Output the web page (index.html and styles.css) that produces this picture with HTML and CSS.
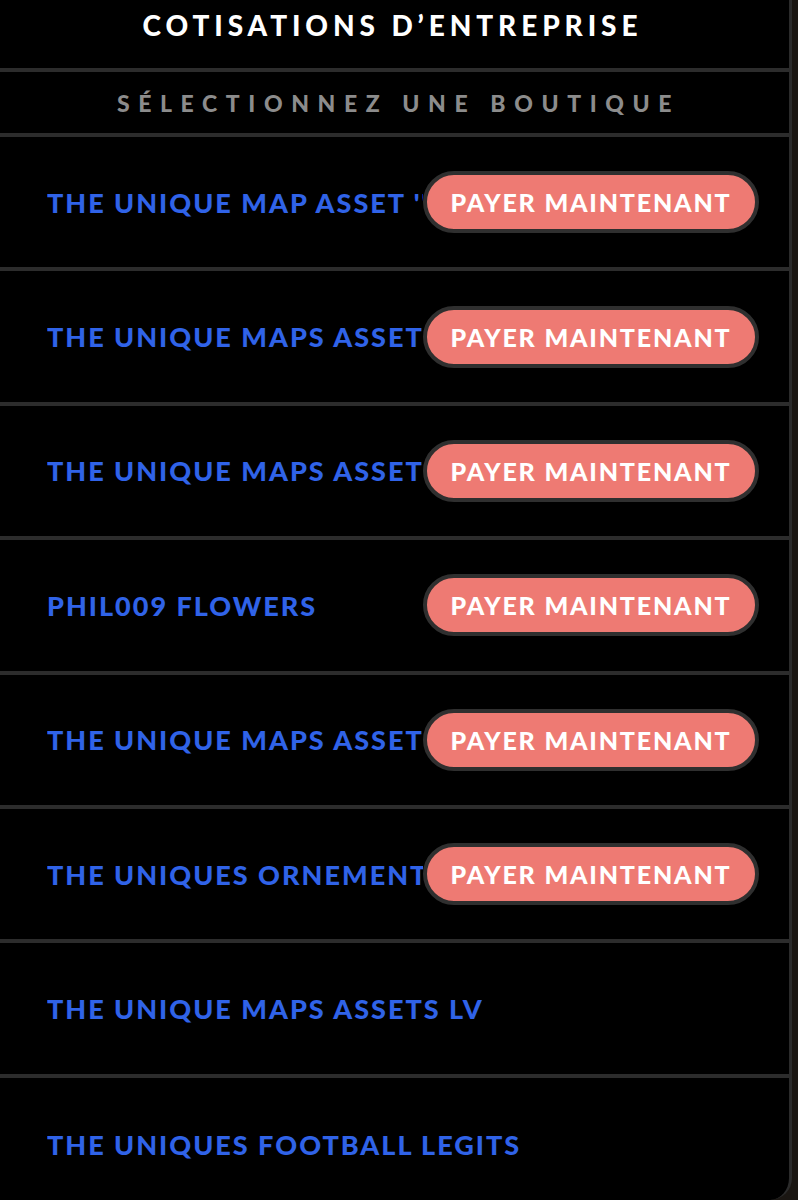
FILE: index.html
```html
<!DOCTYPE html>
<html lang="fr">
<head>
    <meta charset="UTF-8">
    <meta name="viewport" content="width=device-width, initial-scale=1.0">
    <title>Cotisations d'entreprise</title>
    <link rel="stylesheet" href="styles.css">
</head>
<body>
    <div class="panel">
        <div class="panel-title">COTISATIONS D’ENTREPRISE</div>
        <div class="panel-subtitle">SÉLECTIONNEZ UNE BOUTIQUE</div>

        <div class="shop-row">
            <span class="shop-name">THE UNIQUE MAP ASSET ''</span>
            <button class="pay-btn">PAYER MAINTENANT</button>
        </div>
        <div class="shop-row">
            <span class="shop-name">THE UNIQUE MAPS ASSETS</span>
            <button class="pay-btn">PAYER MAINTENANT</button>
        </div>
        <div class="shop-row">
            <span class="shop-name">THE UNIQUE MAPS ASSETS</span>
            <button class="pay-btn">PAYER MAINTENANT</button>
        </div>
        <div class="shop-row">
            <span class="shop-name">PHIL009 FLOWERS</span>
            <button class="pay-btn">PAYER MAINTENANT</button>
        </div>
        <div class="shop-row">
            <span class="shop-name">THE UNIQUE MAPS ASSETS</span>
            <button class="pay-btn">PAYER MAINTENANT</button>
        </div>
        <div class="shop-row">
            <span class="shop-name">THE UNIQUES ORNEMENTS</span>
            <button class="pay-btn">PAYER MAINTENANT</button>
        </div>
        <div class="shop-row">
            <span class="shop-name">THE UNIQUE MAPS ASSETS LV</span>
        </div>
        <div class="shop-row last">
            <span class="shop-name">THE UNIQUES FOOTBALL LEGITS</span>
        </div>
    </div>
</body>
</html>
```

FILE: styles.css
```css
* {
    margin: 0;
    padding: 0;
    box-sizing: border-box;
}

body {
    font-family: Lato, 'Open Sans', sans-serif;
    background: #1a1612;
    width: 798px;
    height: 1200px;
    overflow: hidden;
}

.panel {
    width: 792px;
    height: 1200px;
    background: #000;
    border-right: 3px solid #2b2b2b;
    border-bottom-right-radius: 22px;
    overflow: hidden;
}

.panel-title {
    height: 72px;
    padding-top: 8px;
    border-bottom: 4px solid #2c2c2c;
    display: flex;
    justify-content: center;
    color: #fff;
    font-weight: 900;
    font-size: 28px;
    letter-spacing: 4.9px;
    padding-right: 4px;
}

.panel-subtitle {
    height: 65px;
    border-bottom: 4px solid #2c2c2c;
    display: flex;
    align-items: center;
    justify-content: center;
    color: #8c8c8c;
    font-weight: 900;
    font-size: 23px;
    letter-spacing: 8.6px;
    padding-left: 8px;
}

.shop-row {
    height: 134.4px;
    border-bottom: 4px solid #2c2c2c;
    display: flex;
    align-items: center;
    padding-left: 47px;
    padding-right: 30px;
}

.shop-row.last {
    border-bottom: none;
}

.shop-name {
    flex: 1;
    min-width: 0;
    overflow: hidden;
    white-space: nowrap;
    color: #3063e8;
    font-weight: 900;
    font-size: 27px;
    letter-spacing: 2px;
}

.pay-btn {
    flex-shrink: 0;
    width: 336px;
    height: 62px;
    border: 4px solid #2f2f2f;
    border-radius: 31px;
    background: #ee7a73;
    color: #fff;
    font-family: Lato, 'Open Sans', sans-serif;
    font-weight: 900;
    font-size: 25px;
    letter-spacing: 1.8px;
}
```
